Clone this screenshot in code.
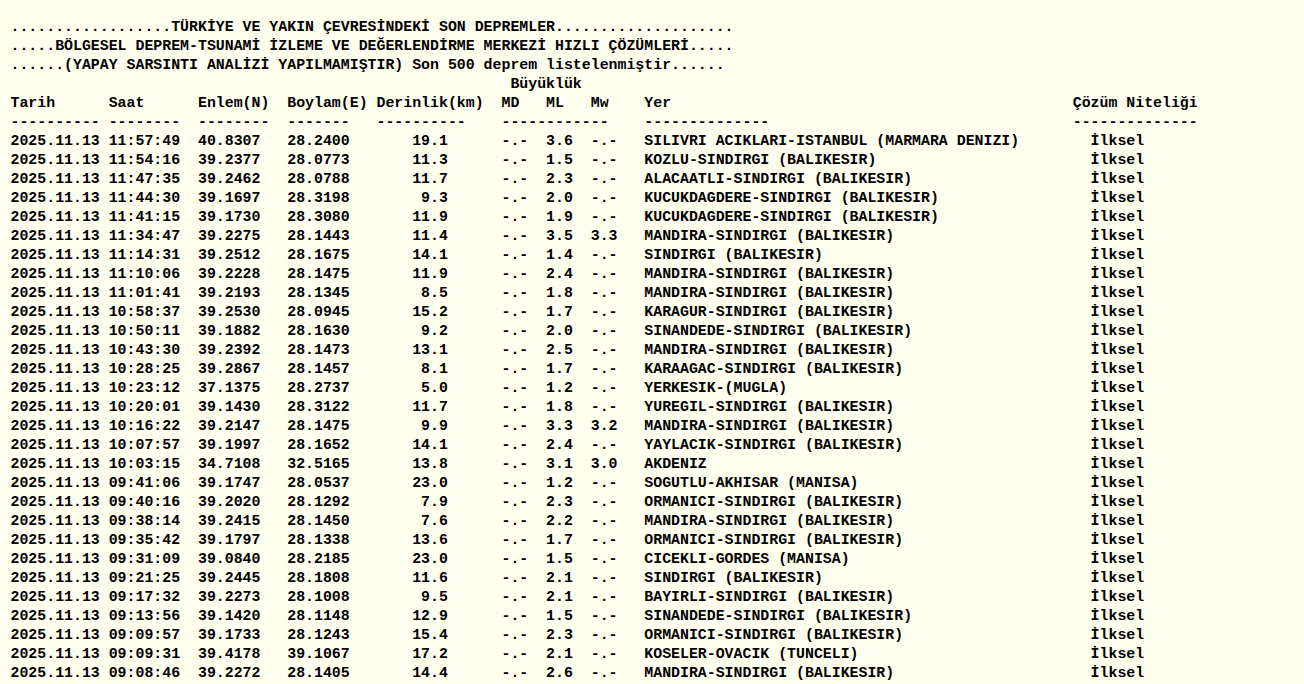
const rows: [string, string, string, string, string, string, string][] = [
	["11:57:49", "40.8307", "28.2400", "19.1", "3.6", "-.-", "SILIVRI ACIKLARI-ISTANBUL (MARMARA DENIZI)"],
	["11:54:16", "39.2377", "28.0773", "11.3", "1.5", "-.-", "KOZLU-SINDIRGI (BALIKESIR)"],
	["11:47:35", "39.2462", "28.0788", "11.7", "2.3", "-.-", "ALACAATLI-SINDIRGI (BALIKESIR)"],
	["11:44:30", "39.1697", "28.3198", " 9.3", "2.0", "-.-", "KUCUKDAGDERE-SINDIRGI (BALIKESIR)"],
	["11:41:15", "39.1730", "28.3080", "11.9", "1.9", "-.-", "KUCUKDAGDERE-SINDIRGI (BALIKESIR)"],
	["11:34:47", "39.2275", "28.1443", "11.4", "3.5", "3.3", "MANDIRA-SINDIRGI (BALIKESIR)"],
	["11:14:31", "39.2512", "28.1675", "14.1", "1.4", "-.-", "SINDIRGI (BALIKESIR)"],
	["11:10:06", "39.2228", "28.1475", "11.9", "2.4", "-.-", "MANDIRA-SINDIRGI (BALIKESIR)"],
	["11:01:41", "39.2193", "28.1345", " 8.5", "1.8", "-.-", "MANDIRA-SINDIRGI (BALIKESIR)"],
	["10:58:37", "39.2530", "28.0945", "15.2", "1.7", "-.-", "KARAGUR-SINDIRGI (BALIKESIR)"],
	["10:50:11", "39.1882", "28.1630", " 9.2", "2.0", "-.-", "SINANDEDE-SINDIRGI (BALIKESIR)"],
	["10:43:30", "39.2392", "28.1473", "13.1", "2.5", "-.-", "MANDIRA-SINDIRGI (BALIKESIR)"],
	["10:28:25", "39.2867", "28.1457", " 8.1", "1.7", "-.-", "KARAAGAC-SINDIRGI (BALIKESIR)"],
	["10:23:12", "37.1375", "28.2737", " 5.0", "1.2", "-.-", "YERKESIK-(MUGLA)"],
	["10:20:01", "39.1430", "28.3122", "11.7", "1.8", "-.-", "YUREGIL-SINDIRGI (BALIKESIR)"],
	["10:16:22", "39.2147", "28.1475", " 9.9", "3.3", "3.2", "MANDIRA-SINDIRGI (BALIKESIR)"],
	["10:07:57", "39.1997", "28.1652", "14.1", "2.4", "-.-", "YAYLACIK-SINDIRGI (BALIKESIR)"],
	["10:03:15", "34.7108", "32.5165", "13.8", "3.1", "3.0", "AKDENIZ"],
	["09:41:06", "39.1747", "28.0537", "23.0", "1.2", "-.-", "SOGUTLU-AKHISAR (MANISA)"],
	["09:40:16", "39.2020", "28.1292", " 7.9", "2.3", "-.-", "ORMANICI-SINDIRGI (BALIKESIR)"],
	["09:38:14", "39.2415", "28.1450", " 7.6", "2.2", "-.-", "MANDIRA-SINDIRGI (BALIKESIR)"],
	["09:35:42", "39.1797", "28.1338", "13.6", "1.7", "-.-", "ORMANICI-SINDIRGI (BALIKESIR)"],
	["09:31:09", "39.0840", "28.2185", "23.0", "1.5", "-.-", "CICEKLI-GORDES (MANISA)"],
	["09:21:25", "39.2445", "28.1808", "11.6", "2.1", "-.-", "SINDIRGI (BALIKESIR)"],
	["09:17:32", "39.2273", "28.1008", " 9.5", "2.1", "-.-", "BAYIRLI-SINDIRGI (BALIKESIR)"],
	["09:13:56", "39.1420", "28.1148", "12.9", "1.5", "-.-", "SINANDEDE-SINDIRGI (BALIKESIR)"],
	["09:09:57", "39.1733", "28.1243", "15.4", "2.3", "-.-", "ORMANICI-SINDIRGI (BALIKESIR)"],
	["09:09:31", "39.4178", "39.1067", "17.2", "2.1", "-.-", "KOSELER-OVACIK (TUNCELI)"],
	["09:08:46", "39.2272", "28.1405", "14.4", "2.6", "-.-", "MANDIRA-SINDIRGI (BALIKESIR)"],
];

const line = (r: (typeof rows)[number]) =>
	"2025.11.13 " +
	r[0] +
	"  " +
	r[1] +
	"   " +
	r[2] +
	"       " +
	r[3] +
	"      -.-  " +
	r[4] +
	"  " +
	r[5] +
	"   " +
	r[6].padEnd(50) +
	"İlksel";

const header = [
	"..................TÜRKİYE VE YAKIN ÇEVRESİNDEKİ SON DEPREMLER....................",
	".....BÖLGESEL DEPREM-TSUNAMİ İZLEME VE DEĞERLENDİRME MERKEZİ HIZLI ÇÖZÜMLERİ.....",
	"......(YAPAY SARSINTI ANALİZİ YAPILMAMIŞTIR) Son 500 deprem listelenmiştir......",
	"                                                        Büyüklük",
	"Tarih      Saat      Enlem(N)  Boylam(E) Derinlik(km)  MD   ML   Mw    Yer" + " ".repeat(45) + "Çözüm Niteliği",
	"---------- --------  --------  -------   ----------    ------------    --------------" + " ".repeat(34) + "--------------",
];

export default function App() {
	return (
		<div className="h-screen overflow-hidden bg-[#fffff0]">
			<pre className="pl-[10.5px] pt-[18px] font-['Liberation_Mono',monospace] text-[14.88px] font-bold leading-[19px] text-black">
				{header.join("\n") + "\n" + rows.map(line).join("\n") + "\n" + " ".repeat(121) + "İlksel"}
			</pre>
		</div>
	);
}
